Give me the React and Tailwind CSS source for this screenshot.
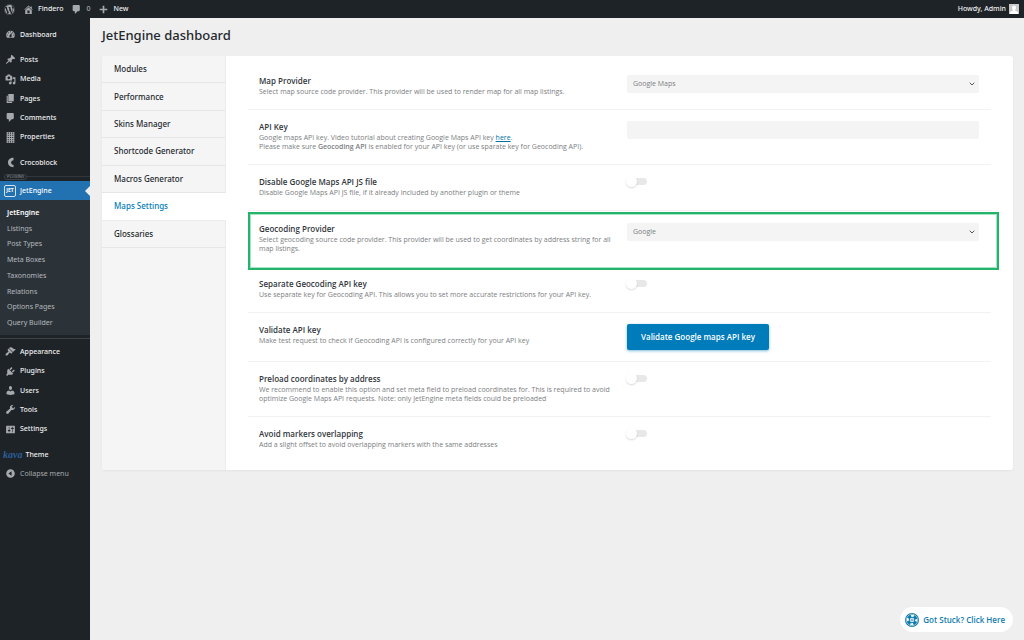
import React from "react";
import { FaWordpress } from "react-icons/fa";
import { ChevronDown } from "lucide-react";

// Admin menu glyphs, drawn on a 20x20 grid
const ICONS = {
  home: "M16 8.5l1.53 1.53-1.06 1.06L10 4.6l-6.47 6.49-1.06-1.06L10 2.5l4 4v-2h2v4zm-6-2.46l6 5.99V18H4v-5.97zM12 17v-5H8v5h4z",
  comments:
    "M5 2h9c1.1 0 2 .9 2 2v7c0 1.1-.9 2-2 2h-2l-5 5v-5H5c-1.1 0-2-.9-2-2V4c0-1.1.9-2 2-2z",
  plus: "M17 8.5v3h-5.5V17h-3v-5.5H3v-3h5.5V3h3v5.5H17z",
  dashboard:
    "M3.76 16h12.48c1.1-1.37 1.76-3.11 1.76-5 0-4.42-3.58-8-8-8s-8 3.58-8 8c0 1.89.66 3.63 1.76 5zM10 4c.55 0 1 .45 1 1s-.45 1-1 1-1-.45-1-1 .45-1 1-1zM6 6c.55 0 1 .45 1 1s-.45 1-1 1-1-.45-1-1 .45-1 1-1zm8 0c.55 0 1 .45 1 1s-.45 1-1 1-1-.45-1-1 .45-1 1-1zm-5.37 5.55L12 7v6c0 1.1-.9 2-2 2s-2-.9-2-2c0-.57.24-1.08.63-1.45zM4 10c.55 0 1 .45 1 1s-.45 1-1 1-1-.45-1-1 .45-1 1-1zm12 0c.55 0 1 .45 1 1s-.45 1-1 1-1-.45-1-1 .45-1 1-1z",
  posts:
    "M10.44 3.02l1.82-1.82 6.36 6.35-1.83 1.82c-1.05-.68-2.48-.57-3.41.36l-.75.75c-.92.93-1.04 2.35-.35 3.41l-1.83 1.82-2.41-2.41-2.8 2.79c-.42.42-3.38 2.71-3.8 2.29s1.86-3.39 2.28-3.81l2.79-2.79L4.1 9.36l1.83-1.82c1.05.69 2.48.57 3.4-.36l.75-.75c.93-.92 1.05-2.35.36-3.41z",
  media:
    "M13 11V4c0-.55-.45-1-1-1h-1.67L9 1H5L3.67 3H2c-.55 0-1 .45-1 1v7c0 .55.45 1 1 1h10c.55 0 1-.45 1-1zM7 4.5c1.38 0 2.5 1.12 2.5 2.5S8.38 9.5 7 9.5 4.5 8.38 4.5 7 5.62 4.5 7 4.5zM14 6h5v10.5c0 1.38-1.12 2.5-2.5 2.5S14 17.88 14 16.5s1.12-2.5 2.5-2.5c.17 0 .34.02.5.05V9h-3V6zm-4 8.05V13h2v3.5c0 1.38-1.12 2.5-2.5 2.5S7 17.88 7 16.5 8.12 14 9.5 14c.17 0 .34.02.5.05z",
  pages: "M6 15V2h10v13H6zm-1 1h8v2H3V5h2v11z",
  building:
    "M3 20h14V0H3v20zM7 3H5V1h2v2zm4 0H9V1h2v2zm4 0h-2V1h2v2zM7 7H5V5h2v2zm4 0H9V5h2v2zm4 0h-2V5h2v2zM7 11H5V9h2v2zm4 0H9V9h2v2zm4 0h-2V9h2v2zM7 15H5v-2h2v2zm4 0H9v-2h2v2zm4 0h-2v-2h2v2zM7 19H5v-2h2v2zm4 0H9v-2h2v2zm4 0h-2v-2h2v2z",
  crocoblock:
    "M15.5 1.5v4.2c-2.6 0-4.4 1.8-4.4 4.3s1.8 4.3 4.4 4.3v4.2c-6 0-10-3.5-10-8.5s4-8.5 10-8.5z",
  appearance:
    "M14.48 11.06L7.41 3.99l1.5-1.5c.5-.56 2.3-.47 3.51.32 1.21.8 1.43 1.28 2.91 2.1 1.18.64 2.45 1.26 4.45.85zm-.71.71L6.7 4.7 4.93 6.47c-.39.39-.39 1.02 0 1.41l1.06 1.06c.39.39.39 1.03 0 1.42-.6.6-1.43 1.11-2.21 1.69-.35.26-.7.53-1.01.84C1.43 14.23.4 16.08 1.4 17.07c.99 1 2.84-.03 4.18-1.36.31-.31.58-.66.85-1.02.57-.78 1.08-1.61 1.69-2.21.39-.39 1.02-.39 1.41 0l1.06 1.06c.39.39 1.02.39 1.41 0z",
  plugins:
    "M13.11 4.36L9.87 7.6 8 5.73l3.24-3.24c.35-.34 1.05-.2 1.56.32.52.51.66 1.21.31 1.55zm-8 1.77l.91-1.12 9.01 9.01-1.19.84c-.71.71-2.63 1.16-3.82 1.16H6.14L4.9 17.26c-.59.59-1.54.59-2.12 0-.59-.58-.59-1.53 0-2.12l1.24-1.24v-3.88c0-1.13.4-3.19 1.09-3.89zm7.26 3.97l3.24-3.24c.34-.35 1.04-.21 1.55.31.52.51.66 1.21.31 1.55l-3.24 3.25z",
  users:
    "M10 9.25c-2.27 0-2.73-3.44-2.73-3.44C7 4.02 7.82 2 9.97 2c2.16 0 2.98 2.02 2.71 3.81 0 0-.41 3.44-2.68 3.44zm0 2.57L12.72 10c2.39 0 4.52 2.33 4.52 4.53v2.49s-3.65 1.13-7.24 1.13c-3.65 0-7.24-1.13-7.24-1.13v-2.49c0-2.25 1.94-4.48 4.47-4.48z",
  tools:
    "M16.68 9.77c-1.34 1.34-3.3 1.67-4.95.99l-5.41 6.52c-.99.99-2.59.99-3.58 0s-.99-2.59 0-3.57l6.52-5.42c-.68-1.65-.35-3.61.99-4.95 1.28-1.28 3.12-1.62 4.72-1.06l-2.89 2.89 2.82 2.82 2.86-2.87c.53 1.58.18 3.39-1.08 4.65z",
  settings:
    "M18 16V4c0-.55-.45-1-1-1H3c-.55 0-1 .45-1 1v12c0 .55.45 1 1 1h14c.55 0 1-.45 1-1zM8 11h1c.55 0 1 .45 1 1s-.45 1-1 1H8v1.5c0 .28-.22.5-.5.5s-.5-.22-.5-.5V13H6c-.55 0-1-.45-1-1s.45-1 1-1h1V5.5c0-.28.22-.5.5-.5s.5.22.5.5V11zm5-2h-1c-.55 0-1-.45-1-1s.45-1 1-1h1V5.5c0-.28.22-.5.5-.5s.5.22.5.5V7h1c.55 0 1 .45 1 1s-.45 1-1 1h-1v5.5c0 .28-.22.5-.5.5s-.5-.22-.5-.5V9z",
  collapse:
    "M10 2.16c4.33 0 7.84 3.51 7.84 7.84s-3.51 7.84-7.84 7.84S2.16 14.33 2.16 10 5.71 2.16 10 2.16zm2 11.72V6.12L6.18 9.97z",
};

const CONTENT_MENU = [
  { icon: "posts", label: "Posts" },
  { icon: "media", label: "Media" },
  { icon: "pages", label: "Pages" },
  { icon: "comments", label: "Comments" },
  { icon: "building", label: "Properties" },
];

const SYSTEM_MENU = [
  { icon: "appearance", label: "Appearance" },
  { icon: "plugins", label: "Plugins" },
  { icon: "users", label: "Users" },
  { icon: "tools", label: "Tools" },
  { icon: "settings", label: "Settings" },
];

const SUBMENU = [
  "JetEngine",
  "Listings",
  "Post Types",
  "Meta Boxes",
  "Taxonomies",
  "Relations",
  "Options Pages",
  "Query Builder",
];

const TABS = [
  "Modules",
  "Performance",
  "Skins Manager",
  "Shortcode Generator",
  "Macros Generator",
  "Maps Settings",
  "Glossaries",
];

function Icon({ name, className = "size-[11px]" }) {
  return (
    <svg viewBox="0 0 20 20" className={`shrink-0 ${className}`} aria-hidden="true">
      <path d={ICONS[name]} fill="currentColor" fillRule="evenodd" />
    </svg>
  );
}

function MenuItem({ icon, label }) {
  return (
    <a href="#" className="flex min-h-[19px] flex-1 items-center gap-1 pl-[5px] text-[#f0f0f1]">
      <Icon name={icon} className="size-[11px] text-[#a7aaad]" />
      {label}
    </a>
  );
}

function TopBar() {
  return (
    <header className="flex h-[18px] shrink-0 items-center bg-[#1d2327] font-['Noto_Sans',sans-serif] text-[7px] leading-[10px] font-medium text-[#f0f0f1]">
      <a href="#" aria-label="About WordPress" className="ml-1 text-[#a7aaad]">
        <FaWordpress className="size-[11px]" />
      </a>
      <a href="#" className="ml-2 flex items-center gap-1">
        <Icon name="home" className="size-[11px] text-[#a7aaad]" />
        Findero
      </a>
      <a href="#" className="ml-2 flex items-center gap-1 text-[#a7aaad]">
        <Icon name="comments" />0
      </a>
      <a href="#" className="ml-2 flex items-center gap-1">
        <Icon name="plus" className="size-[11px] text-[#a7aaad]" />
        New
      </a>
      <a href="#" className="mr-[5px] ml-auto flex items-center gap-[3px]">
        Howdy, Admin
        <svg viewBox="0 0 20 20" className="size-[10px]" aria-hidden="true">
          <rect width="20" height="20" fill="#c9cacc" />
          <path
            d="M10 3c2.500 0 4 1.800 4 4.200 0 2-1 3.800-2 4.600v1.400l6 2.800v4H2v-4l6-2.800v-1.400c-1-.8-2-2.600-2-4.600C6 4.800 7.500 3 10 3z"
            fill="#fff"
          />
        </svg>
      </a>
    </header>
  );
}

function Sidebar() {
  return (
    <nav className="flex w-[90px] shrink-0 flex-col bg-[#1d2327] pt-[7px] font-['Noto_Sans',sans-serif] text-[7px] leading-[10px] font-medium">
      <div className="flex flex-col">
        <MenuItem icon="dashboard" label="Dashboard" />
      </div>
      <div className="mt-[6px] flex h-[97px] flex-col">
        {CONTENT_MENU.map((item) => (
          <MenuItem key={item.label} {...item} />
        ))}
      </div>
      <div className="mt-[6px] flex flex-col">
        <MenuItem icon="crocoblock" label="Crocoblock" />
      </div>

      {/* Plugins divider */}
      <div className="flex h-[9px] items-center pl-1">
        <span className="rounded-sm border border-[#3c4349] px-[2px] text-[4px] leading-[4px] text-[#8c8f94]">
          PLUGINS
        </span>
        <span className="h-px flex-1 bg-[#32373c]" />
      </div>

      {/* Current plugin */}
      <a
        href="#"
        aria-current="page"
        className="relative flex h-[19px] items-center gap-1 bg-[#2271b1] pl-1 text-white"
      >
        <span className="flex size-3 items-center justify-center rounded-[2px] border border-white/80 text-[5px] leading-none font-bold">
          JET
        </span>
        JetEngine
        <svg viewBox="0 0 5 10" className="absolute right-0 h-[10px] w-[5px]" aria-hidden="true">
          <path d="M5 0v10L0 5z" fill="#efefef" />
        </svg>
      </a>
      <ul className="flex h-[135px] flex-col bg-[#2c3338] pt-[5px] pb-1 pl-[7px] font-normal text-[#b4b9be]">
        {SUBMENU.map((label, i) => (
          <li key={label} className="flex flex-1 items-center">
            <a href="#" className={i === 0 ? "font-semibold text-white" : ""}>
              {label}
            </a>
          </li>
        ))}
      </ul>

      <div className="mt-[3px] h-px bg-[#3c4349]" />
      <div className="mt-[3px] flex h-[97px] flex-col">
        {SYSTEM_MENU.map((item) => (
          <MenuItem key={item.label} {...item} />
        ))}
      </div>
      <a href="#" className="mt-[6px] flex h-[19px] items-center gap-[3px] pl-[3px] text-[#f0f0f1]">
        <span className="font-['Liberation_Serif',serif] text-[10px] leading-[10px] font-bold text-[#2a5f9e] italic">
          kava
        </span>
        Theme
      </a>
      <button type="button" className="flex h-[19px] items-center gap-1 pl-[5px] text-[#a7aaad]">
        <Icon name="collapse" />
        <span className="font-normal">Collapse menu</span>
      </button>
    </nav>
  );
}

function Tabs() {
  return (
    <div className="w-[124px] shrink-0 border-r border-[#ececec] bg-[#f5f5f5]">
      <div className="flex h-48 flex-col font-['Noto_Sans',sans-serif] text-[8px] leading-[12px] font-medium text-[#23282d]">
        {TABS.map((label) => {
          const active = label === "Maps Settings";
          return (
            <button
              key={label}
              type="button"
              className={
                active
                  ? "-mr-px flex-1 border-b border-[#ececec] bg-white pl-3 text-left text-[#007cba]"
                  : "flex-1 border-b border-[#e6e6e6] pl-3 text-left"
              }
            >
              {label}
            </button>
          );
        })}
      </div>
    </div>
  );
}

function SettingRow({ id, title, description, highlighted, last, children }) {
  return (
    <div
      className={`relative grid grid-cols-2 gap-4 border-b pt-[11px] pr-3 pb-[11px] pl-[11px] ${
        last || highlighted ? "border-transparent" : "border-[#f2f2f2]"
      } ${highlighted ? "mt-px" : ""}`}
    >
      <div className="pb-[2px]">
        <label htmlFor={id} className="block text-[8px] leading-[12px] font-semibold text-[#32373c]">
          {title}
        </label>
        <p className="text-[7px] leading-[9px] text-[#7b7e81]">{description}</p>
      </div>
      <div>{children}</div>
      {highlighted && (
        <div className="pointer-events-none absolute top-0 -right-2 -bottom-1 left-0 border-2 border-[#24b36b] inset-ring inset-ring-[#a5e6c5]" />
      )}
    </div>
  );
}

function SelectField({ id, value }) {
  return (
    <div className="relative flex items-center">
      <select
        id={id}
        defaultValue={value}
        className="h-[18px] w-full appearance-none rounded-[2px] bg-[#f4f4f4] px-[6px] text-[7px] leading-[10px] text-[#7b7e81]"
      >
        <option>{value}</option>
      </select>
      <ChevronDown
        className="pointer-events-none absolute right-[3px] size-2 text-[#50575e]"
        strokeWidth={3}
      />
    </div>
  );
}

function Toggle({ id }) {
  return (
    <span className="relative flex h-[11px] w-5 items-center">
      <input id={id} type="checkbox" role="switch" className="peer absolute inset-0 z-10 opacity-0" />
      <span className="h-[7px] w-full rounded-full bg-[#e8e8e8] peer-checked:bg-[#b3d8ea]" />
      <span className="absolute -left-px size-[11px] rounded-full bg-white shadow-[0_1px_2px_rgba(0,0,0,0.15)] peer-checked:left-[10px]" />
    </span>
  );
}

function MapsSettings() {
  return (
    <div className="min-w-0 flex-1 px-[22px] pt-2 pb-[7px]">
      <SettingRow
        id="map-provider"
        title="Map Provider"
        description="Select map source code provider. This provider will be used to render map for all map listings."
      >
        <SelectField id="map-provider" value="Google Maps" />
      </SettingRow>
      <SettingRow
        id="api-key"
        title="API Key"
        description={
          <>
            Google maps API key. Video tutorial about creating Google Maps API key{" "}
            <a href="#" className="text-[#0071a1] underline">
              here
            </a>
            .
            <br />
            Please make sure <b className="font-semibold">Geocoding API</b> is enabled for your API
            key (or use sparate key for Geocoding API).
          </>
        }
      >
        <input
          id="api-key"
          type="text"
          className="block h-[18px] w-full rounded-[2px] bg-[#f4f4f4] px-[6px] text-[7px]"
        />
      </SettingRow>
      <SettingRow
        id="disable-js"
        title="Disable Google Maps API JS file"
        description="Disable Google Maps API JS file, if it already included by another plugin or theme"
      >
        <Toggle id="disable-js" />
      </SettingRow>
      <SettingRow
        id="geocoding-provider"
        title="Geocoding Provider"
        description="Select geocoding source code provider. This provider will be used to get coordinates by address string for all map listings."
        highlighted
      >
        <SelectField id="geocoding-provider" value="Google" />
      </SettingRow>
      <SettingRow
        id="separate-key"
        title="Separate Geocoding API key"
        description="Use separate key for Geocoding API. This allows you to set more accurate restrictions for your API key."
      >
        <Toggle id="separate-key" />
      </SettingRow>
      <SettingRow
        id="validate-key"
        title="Validate API key"
        description="Make test request to check if Geocoding API is configured correctly for your API key"
      >
        <button
          id="validate-key"
          type="button"
          className="block h-[26px] rounded-[2px] bg-[#007cba] px-[14px] text-[8px] leading-[12px] font-semibold text-white shadow-[0_1px_3px_rgba(0,124,186,0.5)]"
        >
          Validate Google maps API key
        </button>
      </SettingRow>
      <SettingRow
        id="preload"
        title="Preload coordinates by address"
        description="We recommend to enable this option and set meta field to preload coordinates for. This is required to avoid optimize Google Maps API requests. Note: only JetEngine meta fields could be preloaded"
      >
        <Toggle id="preload" />
      </SettingRow>
      <SettingRow
        id="overlapping"
        title="Avoid markers overlapping"
        description="Add a slight offset to avoid overlapping markers with the same addresses"
        last
      >
        <Toggle id="overlapping" />
      </SettingRow>
    </div>
  );
}

function HelpButton() {
  return (
    <button
      type="button"
      className="fixed right-[11px] bottom-2 flex h-[25px] items-center gap-1 rounded-full bg-white pr-2 pl-[5px] text-[8px] leading-[12px] font-semibold text-[#0f7cad]"
    >
      <svg viewBox="0 0 28 28" className="size-[14px]" aria-hidden="true">
        <circle cx="14" cy="14" r="14" fill="#0f7cad" />
        <circle cx="14" cy="14" r="8.500" fill="none" stroke="#fff" strokeWidth="4" strokeDasharray="6 7.350" strokeDashoffset="3" />
        <circle cx="14" cy="14" r="11.500" fill="none" stroke="#fff" strokeWidth="1" />
        <circle cx="14" cy="14" r="4.500" fill="#fff" />
        <path d="M11 12.500h6M11 15.500h6" stroke="#0f7cad" strokeWidth="1.500" />
      </svg>
      Got Stuck? Click Here
    </button>
  );
}

export default function App() {
  return (
    <div className="flex min-h-screen flex-col bg-[#efefef] font-['Open_Sans','Noto_Sans',sans-serif]">
      <TopBar />
      <div className="flex flex-1">
        <Sidebar />
        <main className="min-w-0 flex-1 pr-[11px] pl-3">
          <h1 className="pt-2 pb-3 font-['Noto_Sans',sans-serif] text-[13px] leading-[18px] font-medium text-[#23282d]">
            JetEngine dashboard
          </h1>
          <div className="flex overflow-hidden rounded-[3px] bg-white shadow-[0_1px_3px_rgba(0,0,0,0.05)]">
            <Tabs />
            <MapsSettings />
          </div>
        </main>
      </div>
      <HelpButton />
    </div>
  );
}
